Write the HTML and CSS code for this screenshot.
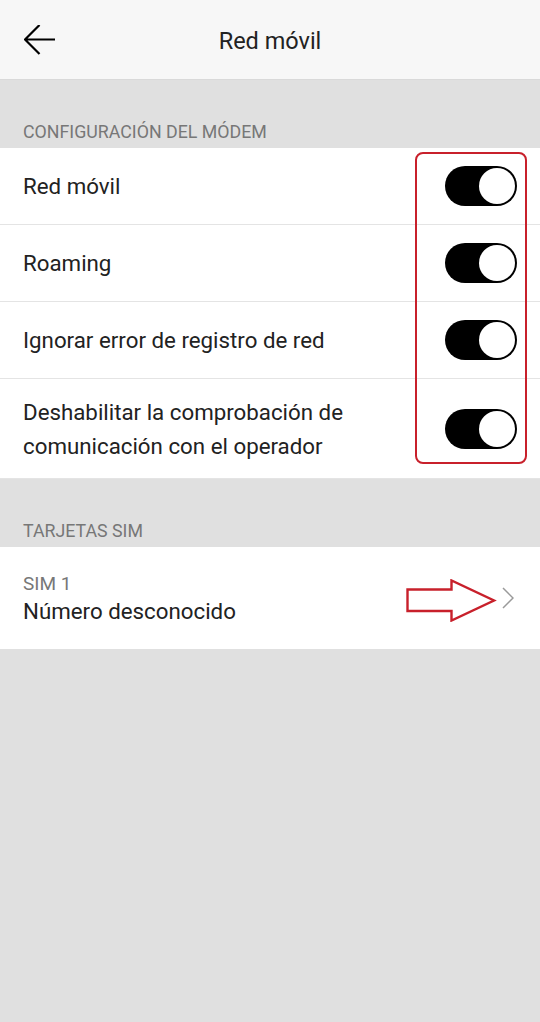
FILE: index.html
```html
<!DOCTYPE html>
<html lang="es">
<head>
<meta charset="utf-8">
<title>Red móvil</title>
<link rel="stylesheet" href="styles.css">
</head>
<body>
<div class="screen">
  <header class="topbar">
    <svg class="back" width="32" height="32" viewBox="0 0 32 32" aria-hidden="true">
      <path d="M1 14.5 H31 M15.5 0 L1 14.5 L15.5 29" fill="none" stroke="#000" stroke-width="2.2"/>
    </svg>
    <h1 class="title">Red móvil</h1>
  </header>

  <div class="section-label">CONFIGURACIÓN DEL MÓDEM</div>
  <div class="group">
    <div class="row"><span class="row-text">Red móvil</span><span class="switch"><span class="knob"></span></span></div>
    <div class="row"><span class="row-text">Roaming</span><span class="switch"><span class="knob"></span></span></div>
    <div class="row"><span class="row-text">Ignorar error de registro de red</span><span class="switch"><span class="knob"></span></span></div>
    <div class="row tall"><span class="row-text">Deshabilitar la comprobación de<br>comunicación con el operador</span><span class="switch"><span class="knob"></span></span></div>
    <div class="highlight-box"></div>
  </div>

  <div class="section-label">TARJETAS SIM</div>
  <div class="group">
    <div class="row sim">
      <div class="sim-text">
        <span class="sim-label">SIM 1</span>
        <span class="sim-number">Número desconocido</span>
      </div>
      <svg class="red-arrow" width="92" height="43" viewBox="0 0 92 43" aria-hidden="true">
        <path d="M1.5 10.5 H45.5 V1.5 L88 21.5 L45.5 41.5 V32 H1.5 Z" fill="none" stroke="#c8202b" stroke-width="2.4" stroke-linejoin="miter"/>
      </svg>
      <svg class="chevron" width="12" height="22" viewBox="0 0 12 22" aria-hidden="true">
        <path d="M1 1 L11 11 L1 21" fill="none" stroke="#9a9a9a" stroke-width="1.5"/>
      </svg>
    </div>
  </div>
</div>
</body>
</html>
```
FILE: styles.css
```css
html, body {
  margin: 0;
  padding: 0;
}
body {
  background: #e0e0e0;
  font-family: Roboto, "Noto Sans", "Liberation Sans", sans-serif;
  color: #222;
}
.screen {
  width: 540px;
  min-height: 1022px;
  background: #e0e0e0;
}
.topbar {
  height: 79px;
  background: #f7f7f7;
  border-bottom: 1px solid #d9d9d9;
  display: flex;
  align-items: center;
  justify-content: center;
  position: relative;
}
.back {
  position: absolute;
  left: 24px;
  top: 25px;
}
.title {
  margin: 0;
  font-size: 23.5px;
  font-weight: 400;
  color: #222;
  padding-top: 2px;
}
.section-label {
  height: 68px;
  box-sizing: border-box;
  padding: 0 0 6px 23px;
  display: flex;
  align-items: flex-end;
  font-size: 17.8px;
  color: #777;
}
.group {
  background: #fff;
  position: relative;
}
.row {
  display: flex;
  align-items: center;
  justify-content: space-between;
  height: 76px;
  padding: 0 23px;
  border-bottom: 1px solid #e4e4e4;
  font-size: 22.3px;
  color: #222;
}
.row:last-of-type {
  border-bottom: none;
}
.row.tall {
  height: 99px;
  line-height: 34px;
}
.row-text {
  display: block;
}
.switch {
  width: 72px;
  height: 40px;
  border-radius: 20px;
  background: #000;
  position: relative;
  flex: none;
}
.knob {
  position: absolute;
  right: 2px;
  top: 2px;
  width: 36px;
  height: 36px;
  border-radius: 50%;
  background: #fff;
}
.highlight-box {
  position: absolute;
  left: 415px;
  top: 4px;
  width: 108px;
  height: 308px;
  border: 2px solid #c8202b;
  border-radius: 8px;
}
.row.sim {
  height: 102px;
  border-bottom: none;
  justify-content: flex-start;
}
.sim-text {
  display: flex;
  flex-direction: column;
  flex: 1;
  padding-top: 2px;
}
.sim-label {
  font-size: 19px;
  color: #777;
  line-height: 25px;
}
.sim-number {
  font-size: 22.3px;
  color: #222;
  line-height: 31px;
}
.red-arrow {
  flex: none;
  margin-right: 4px;
  margin-top: 5px;
}
.chevron {
  flex: none;
  margin-right: 3px;
}
```
